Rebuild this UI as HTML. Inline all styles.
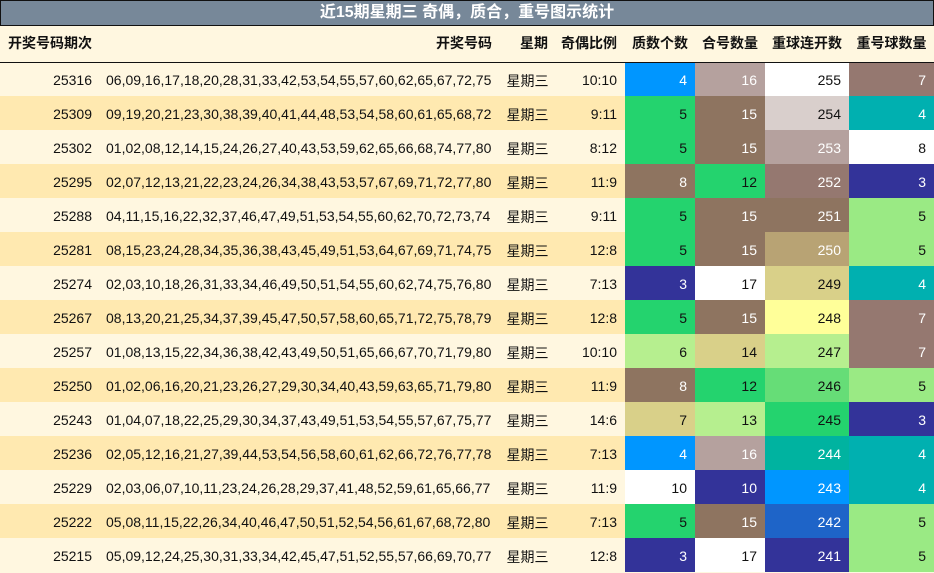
<!DOCTYPE html>
<html><head><meta charset="utf-8">
<style>
*{margin:0;padding:0;box-sizing:border-box}
body{width:934px;height:573px;overflow:hidden;background:#fff7e0;font-family:"Liberation Sans","Noto Sans CJK SC",sans-serif;font-size:14px;color:#111}
.title{height:26px;background:#778899;border:1px solid #111;color:#fff;font-weight:bold;font-size:16px;text-align:center;line-height:24px}
table{border-collapse:collapse;table-layout:fixed;width:934px}
td{height:34px;white-space:nowrap;padding:0;padding-top:2px}
thead td{height:36px;font-weight:bold;background:#fff7e0;border-bottom:1.5px solid #111;padding-top:0;padding-bottom:2px}
tr.l td{background:#fff7e0}
tr.d td{background:#ffe9b0}
.r{text-align:right;padding-right:8px}
.n{padding-left:6px}
.c{text-align:center;padding-top:4px}
thead .c{padding-top:0}
.hr{text-align:right;padding-right:7px}
.w{color:#fff}
</style></head><body>
<div class="title">近15期星期三 奇偶，质合，重号图示统计</div>
<table>
<colgroup><col style="width:100px"><col style="width:400px"><col style="width:55px"><col style="width:70px"><col style="width:70px"><col style="width:70px"><col style="width:84px"><col style="width:85px"></colgroup>
<thead><tr><td style="padding-left:8px">开奖号码期次</td><td class="r">开奖号码</td><td class="hr">星期</td><td class="r">奇偶比例</td><td class="c">质数个数</td><td class="c">合号数量</td><td class="c">重球连开数</td><td class="c">重号球数量</td></tr></thead>
<tbody>
<tr class="l"><td class="r">25316</td><td class="n">06,09,16,17,18,20,28,31,33,42,53,54,55,57,60,62,65,67,72,75</td><td class="c">星期三</td><td class="r">10:10</td><td class="r w" style="background:#0096ff!important">4</td><td class="r w" style="background:#b5a19e!important">16</td><td class="r" style="background:#fff!important">255</td><td class="r w" style="background:#957870!important">7</td></tr>
<tr class="d"><td class="r">25309</td><td class="n">09,19,20,21,23,30,38,39,40,41,44,48,53,54,58,60,61,65,68,72</td><td class="c">星期三</td><td class="r">9:11</td><td class="r" style="background:#24d36e!important">5</td><td class="r w" style="background:#8e7460!important">15</td><td class="r" style="background:#d9cfcc!important">254</td><td class="r w" style="background:#00b0b0!important">4</td></tr>
<tr class="l"><td class="r">25302</td><td class="n">01,02,08,12,14,15,24,26,27,40,43,53,59,62,65,66,68,74,77,80</td><td class="c">星期三</td><td class="r">8:12</td><td class="r" style="background:#24d36e!important">5</td><td class="r w" style="background:#8e7460!important">15</td><td class="r w" style="background:#b5a19e!important">253</td><td class="r" style="background:#fff!important">8</td></tr>
<tr class="d"><td class="r">25295</td><td class="n">02,07,12,13,21,22,23,24,26,34,38,43,53,57,67,69,71,72,77,80</td><td class="c">星期三</td><td class="r">11:9</td><td class="r w" style="background:#8e7460!important">8</td><td class="r" style="background:#24d36e!important">12</td><td class="r w" style="background:#957870!important">252</td><td class="r w" style="background:#333399!important">3</td></tr>
<tr class="l"><td class="r">25288</td><td class="n">04,11,15,16,22,32,37,46,47,49,51,53,54,55,60,62,70,72,73,74</td><td class="c">星期三</td><td class="r">9:11</td><td class="r" style="background:#24d36e!important">5</td><td class="r w" style="background:#8e7460!important">15</td><td class="r w" style="background:#8e7460!important">251</td><td class="r" style="background:#9aea84!important">5</td></tr>
<tr class="d"><td class="r">25281</td><td class="n">08,15,23,24,28,34,35,36,38,43,45,49,51,53,64,67,69,71,74,75</td><td class="c">星期三</td><td class="r">12:8</td><td class="r" style="background:#24d36e!important">5</td><td class="r w" style="background:#8e7460!important">15</td><td class="r w" style="background:#b8a374!important">250</td><td class="r" style="background:#9aea84!important">5</td></tr>
<tr class="l"><td class="r">25274</td><td class="n">02,03,10,18,26,31,33,34,46,49,50,51,54,55,60,62,74,75,76,80</td><td class="c">星期三</td><td class="r">7:13</td><td class="r w" style="background:#333399!important">3</td><td class="r" style="background:#fff!important">17</td><td class="r" style="background:#d9d089!important">249</td><td class="r w" style="background:#00b0b0!important">4</td></tr>
<tr class="d"><td class="r">25267</td><td class="n">08,13,20,21,25,34,37,39,45,47,50,57,58,60,65,71,72,75,78,79</td><td class="c">星期三</td><td class="r">12:8</td><td class="r" style="background:#24d36e!important">5</td><td class="r w" style="background:#8e7460!important">15</td><td class="r" style="background:#ffff99!important">248</td><td class="r w" style="background:#957870!important">7</td></tr>
<tr class="l"><td class="r">25257</td><td class="n">01,08,13,15,22,34,36,38,42,43,49,50,51,65,66,67,70,71,79,80</td><td class="c">星期三</td><td class="r">10:10</td><td class="r" style="background:#b6ef8f!important">6</td><td class="r" style="background:#d9d089!important">14</td><td class="r" style="background:#b6ef8f!important">247</td><td class="r w" style="background:#957870!important">7</td></tr>
<tr class="d"><td class="r">25250</td><td class="n">01,02,06,16,20,21,23,26,27,29,30,34,40,43,59,63,65,71,79,80</td><td class="c">星期三</td><td class="r">11:9</td><td class="r w" style="background:#8e7460!important">8</td><td class="r" style="background:#24d36e!important">12</td><td class="r" style="background:#66dd77!important">246</td><td class="r" style="background:#9aea84!important">5</td></tr>
<tr class="l"><td class="r">25243</td><td class="n">01,04,07,18,22,25,29,30,34,37,43,49,51,53,54,55,57,67,75,77</td><td class="c">星期三</td><td class="r">14:6</td><td class="r" style="background:#d9d089!important">7</td><td class="r" style="background:#b6ef8f!important">13</td><td class="r" style="background:#24d36e!important">245</td><td class="r w" style="background:#333399!important">3</td></tr>
<tr class="d"><td class="r">25236</td><td class="n">02,05,12,16,21,27,39,44,53,54,56,58,60,61,62,66,72,76,77,78</td><td class="c">星期三</td><td class="r">7:13</td><td class="r w" style="background:#0096ff!important">4</td><td class="r w" style="background:#b5a19e!important">16</td><td class="r w" style="background:#00b3a0!important">244</td><td class="r w" style="background:#00b0b0!important">4</td></tr>
<tr class="l"><td class="r">25229</td><td class="n">02,03,06,07,10,11,23,24,26,28,29,37,41,48,52,59,61,65,66,77</td><td class="c">星期三</td><td class="r">11:9</td><td class="r" style="background:#fff!important">10</td><td class="r w" style="background:#333399!important">10</td><td class="r w" style="background:#0096ff!important">243</td><td class="r w" style="background:#00b0b0!important">4</td></tr>
<tr class="d"><td class="r">25222</td><td class="n">05,08,11,15,22,26,34,40,46,47,50,51,52,54,56,61,67,68,72,80</td><td class="c">星期三</td><td class="r">7:13</td><td class="r" style="background:#24d36e!important">5</td><td class="r w" style="background:#8e7460!important">15</td><td class="r w" style="background:#1e64c8!important">242</td><td class="r" style="background:#9aea84!important">5</td></tr>
<tr class="l"><td class="r">25215</td><td class="n">05,09,12,24,25,30,31,33,34,42,45,47,51,52,55,57,66,69,70,77</td><td class="c">星期三</td><td class="r">12:8</td><td class="r w" style="background:#333399!important">3</td><td class="r" style="background:#fff!important">17</td><td class="r w" style="background:#333399!important">241</td><td class="r" style="background:#9aea84!important">5</td></tr>
</tbody></table>
</body></html>
